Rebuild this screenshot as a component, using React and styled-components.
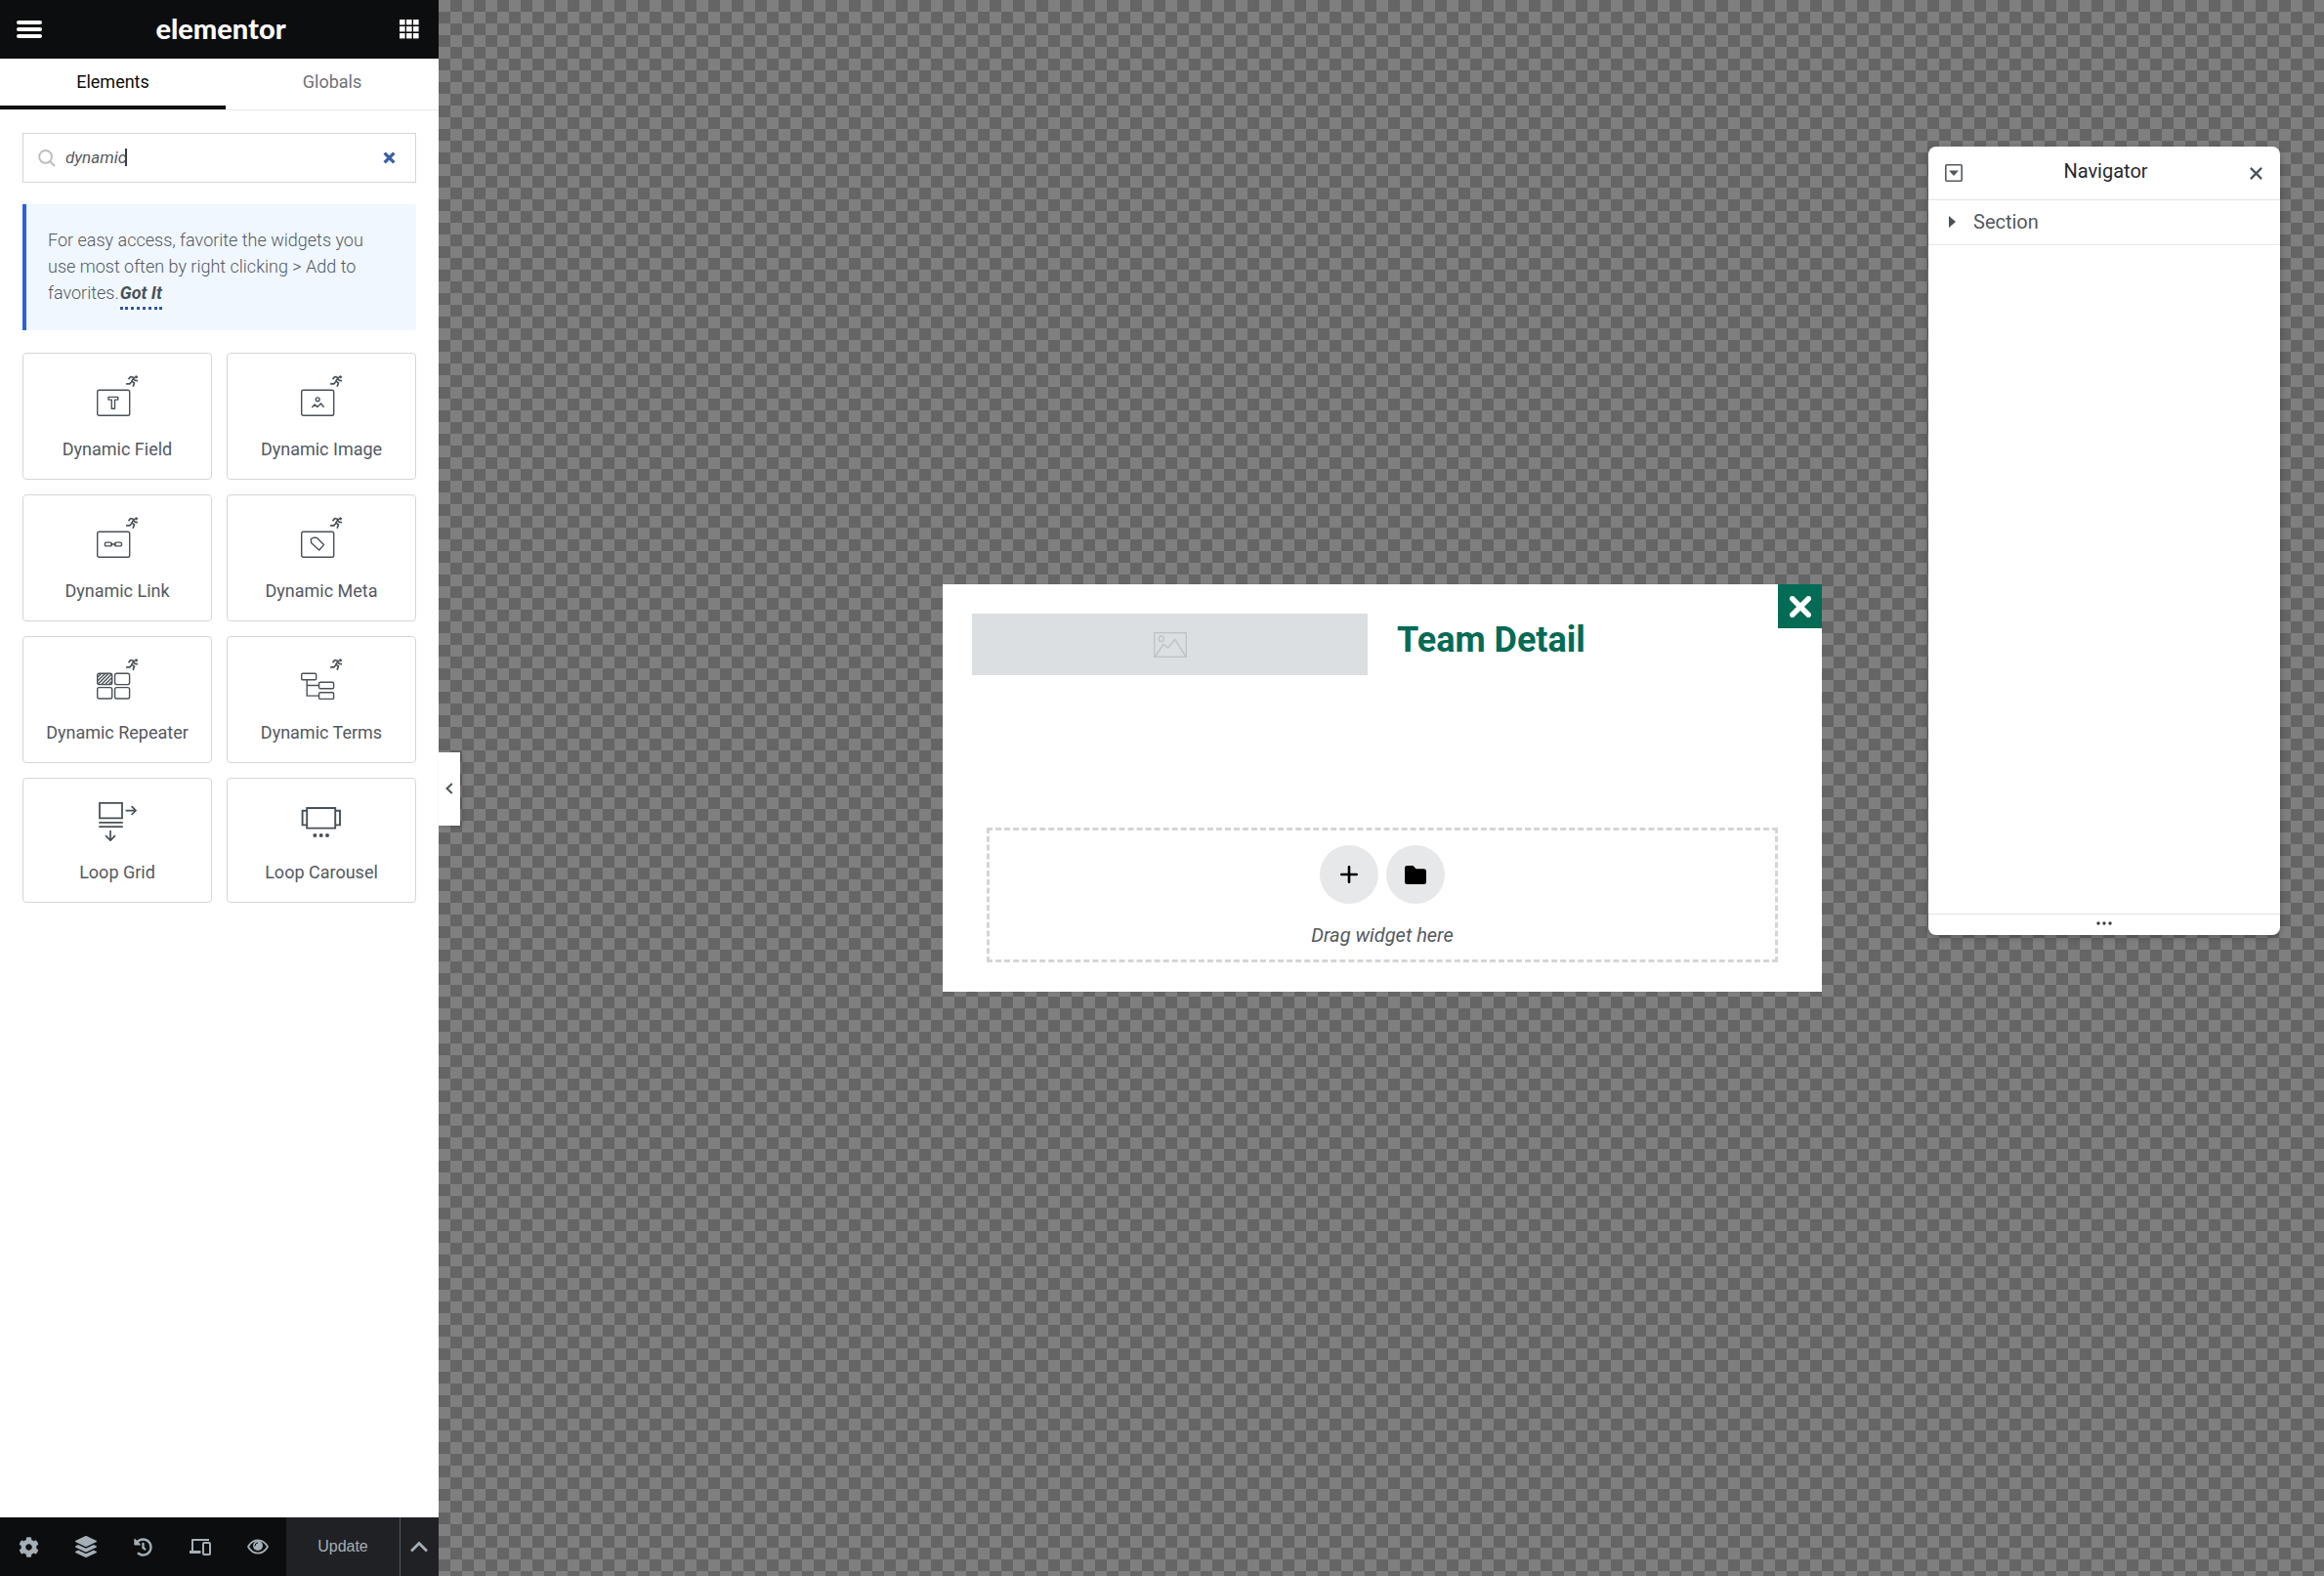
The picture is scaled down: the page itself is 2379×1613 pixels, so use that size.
import React, { useState } from 'react'
import styled, { createGlobalStyle, css } from 'styled-components'
import { FaCog, FaLayerGroup, FaHistory } from 'react-icons/fa'

const GlobalStyle = createGlobalStyle`
  * {
    box-sizing: border-box;
  }
  body {
    margin: 0;
    font-family: Roboto, sans-serif;
    font-size: 18px;
    color: #54595f;
  }
  button {
    padding: 0;
    border: 0;
    background: none;
    font: inherit;
    color: inherit;
    cursor: pointer;
  }
  svg {
    display: block;
  }
`

const Editor = styled.div`
  display: flex;
  min-height: 100vh;
`

/* ---------- panel ---------- */

const Panel = styled.aside`
  flex: 0 0 449px;
  display: flex;
  flex-direction: column;
  background: #fff;
`

const PanelHeader = styled.header`
  display: flex;
  align-items: center;
  justify-content: space-between;
  height: 60px;
  padding: 0 20px 0 17px;
  background: #0c0d0e;
  color: #fff;
`

const Logo = styled.h1`
  margin: 0;
  padding-bottom: 2px;
  font-family: Lato, sans-serif;
  font-size: 29px;
  font-weight: 900;
  line-height: 58px;
`

const Tabs = styled.div`
  display: flex;
  height: 53px;
  border-bottom: 1px solid #e6e9ec;
`

const Tab = styled.button`
  flex: ${props => (props.$active ? '0 0 231px' : 1)};
  padding-bottom: ${props => (props.$active ? 2 : 6)}px;
  color: #6d7278;
  ${props => props.$active && css`
    border-bottom: 4px solid #0c0d0e;
    color: #0c0d0e;
  `}
`

const PanelBody = styled.div`
  flex: 1;
  padding: 23px;
`

const SearchBox = styled.label`
  position: relative;
  display: flex;
  align-items: center;
  gap: 10px;
  height: 51px;
  padding: 0 20px 0 15px;
  border: 1px solid #d4d6d8;
`

const SearchInput = styled.input`
  flex: 1;
  min-width: 0;
  padding: 0 0 2px;
  border: 0;
  outline: 0;
  background: none;
  font: italic 17px/24px Roboto, sans-serif;
  color: #54595f;
`

const Caret = styled.span`
  position: absolute;
  top: 15px;
  left: 104px;
  width: 2px;
  height: 18px;
  background: #3a3d40;
`

const Notice = styled.div`
  margin: 22px 0 23px;
  padding: 23px 30px 25px 22px;
  border-left: 4px solid #2a62d8;
  border-radius: 0 3px 3px 0;
  background: #f0f7ff;
  font-weight: 300;
  line-height: 27px;
`

const GotIt = styled.a`
  margin-left: 1px;
  padding-bottom: 4px;
  border-bottom: 3px dotted #30569f;
  font-style: italic;
  font-weight: 700;
  color: #495157;
  text-decoration: none;
`

const WidgetGrid = styled.div`
  display: grid;
  grid-template-columns: 1fr 1fr;
  gap: 15px;
`

const Widget = styled.button`
  display: flex;
  flex-direction: column;
  align-items: center;
  gap: 18px;
  padding: 22px 0 17px;
  border: 1px solid #d4d6d8;
  border-radius: 4px;
  line-height: 27px;
`

const PanelFooter = styled.footer`
  display: flex;
  height: 60px;
  background: #0c0d0e;
  color: #a4afb7;
`

const Tool = styled.button`
  flex: 1;
  display: flex;
  align-items: center;
  justify-content: center;
`

const Update = styled.button`
  flex: 0 0 116px;
  background: #1f2124;
  font-family: 'Liberation Sans', sans-serif;
  font-size: 16px;
`

const UpdateOptions = styled.button`
  flex: 0 0 40px;
  display: flex;
  align-items: center;
  justify-content: center;
  border-left: 1px solid #515962;
  background: #1f2124;
`

/* ---------- canvas ---------- */

const Canvas = styled.main`
  position: relative;
  flex: 1;
  display: flex;
  align-items: center;
  justify-content: center;
  padding-left: 2px;
  background: conic-gradient(#656565 25%, #7f7f7f 0 50%, #656565 0 75%, #7f7f7f 0) 0 0 / 24px 24px;
`

const PanelToggle = styled.button`
  position: absolute;
  left: 0;
  top: calc(50% - 37px);
  display: flex;
  align-items: center;
  justify-content: center;
  width: 22px;
  height: 75px;
  background: #fff;
  box-shadow: 2px 1px 4px rgba(0, 0, 0, 0.2);
`

const Popup = styled.section`
  position: relative;
  width: 900px;
  padding: 30px;
  background: #fff;
`

const PopupClose = styled.button`
  position: absolute;
  top: 0;
  right: 0;
  display: flex;
  align-items: center;
  justify-content: center;
  width: 45px;
  height: 45px;
  background: #046b55;
`

const Columns = styled.div`
  display: grid;
  grid-template-columns: 1fr 1fr;
  align-items: start;
  gap: 30px;
  min-height: 219px;
`

const ImagePlaceholder = styled.div`
  display: flex;
  align-items: center;
  justify-content: center;
  height: 63px;
  background: #dcdfe1;
`

const Title = styled.h2`
  margin: 0;
  font-size: 36px;
  font-weight: 700;
  line-height: 54px;
  color: #046b55;
`

const DropZone = styled.div`
  margin: 0 15px;
  padding: 15px 0 11px;
  border: 3px dashed #d5d5d5;
  text-align: center;
`

const RoundButtons = styled.div`
  display: flex;
  justify-content: center;
  gap: 8px;
`

const RoundButton = styled.button`
  display: flex;
  align-items: center;
  justify-content: center;
  width: 60px;
  height: 60px;
  border-radius: 50%;
  background: #e6e8ea;
  color: #000;
`

const DropHint = styled.p`
  margin: 18px 0 0;
  font-size: 20px;
  font-style: italic;
  line-height: 28px;
`

/* ---------- navigator ---------- */

const NavigatorWindow = styled.section`
  position: absolute;
  top: 150px;
  right: 45px;
  display: flex;
  flex-direction: column;
  width: 360px;
  height: 807px;
  border-radius: 8px;
  background: #fff;
  box-shadow: 0 2px 6px rgba(0, 0, 0, 0.3);
`

const NavigatorHeader = styled.header`
  display: flex;
  align-items: center;
  justify-content: space-between;
  height: 55px;
  padding: 0 17px;
  border-bottom: 1px solid #e0e3e6;
`

const NavigatorTitle = styled.h3`
  margin: 0;
  padding-bottom: 5px;
  font-size: 20px;
  font-weight: 400;
  color: #26292c;
`

const NavigatorItem = styled.button`
  display: flex;
  align-items: center;
  gap: 18px;
  height: 46px;
  padding: 0 0 2px 21px;
  border-bottom: 1px solid #e6e9ec;
  font-size: 20px;
`

const NavigatorFooter = styled.footer`
  display: flex;
  justify-content: center;
  height: 22px;
  margin-top: auto;
  padding-top: 7px;
  border-top: 1px solid #e0e3e6;
`

/* ---------- icons ---------- */

const MenuIcon = () => (
  <svg width="26" height="18" viewBox="0 0 26 18" fill="currentColor">
    <rect y="0" width="26" height="4" rx="2" />
    <rect y="7" width="26" height="4" rx="2" />
    <rect y="14" width="26" height="4" rx="2" />
  </svg>
)

const AppsIcon = () => (
  <svg width="20" height="20" viewBox="0 0 20 20" fill="currentColor">
    {[0, 7, 14].map(y => [0, 7, 14].map(x => (
      <rect key={`${x}-${y}`} x={x} y={y} width="5.6" height="5.4" />
    )))}
  </svg>
)

const SearchIcon = () => (
  <svg width="18" height="18" viewBox="0 0 18 18" fill="none" stroke="#babfc5" strokeWidth="2">
    <circle cx="7.6" cy="7.4" r="6.4" />
    <path d="M12.2 12.2L17 17" />
  </svg>
)

const CrossIcon = ({ size, weight, color, round }) => (
  <svg width={size} height={size} viewBox="0 0 12 12" stroke={color} strokeWidth={weight} strokeLinecap={round ? 'round' : 'butt'}>
    <path d="M1.5 1.5l9 9M10.5 1.5l-9 9" />
  </svg>
)

const Runner = () => (
  <g fill="none" strokeWidth="1.7" strokeLinecap="round" strokeLinejoin="round">
    <circle cx="40.4" cy="1.8" r="1.1" fill="currentColor" strokeWidth="1" />
    <path d="M33 3.6l1.8-2.1 3.4 1-2.4 3.6 2.6 1.8-1 3.2M37.8 3.4l1.6 2.1 2.6.2M35.2 7.3l-1.4 1.6h-3" />
  </g>
)

const Frame = () => <rect x=".7" y="15.2" width="33" height="26" rx="1.8" />

const dynamicDrawings = {
  field: (
    <>
      <Frame />
      <path d="M12 22.4h9.800v2.700h-3.300v9.200h-3.200v-9.200H12z" strokeLinejoin="round" />
    </>
  ),
  image: (
    <>
      <Frame />
      <circle cx="17.2" cy="24.8" r="1.9" />
      <path d="M11.3 33l2.9-3 2.6 2.6 3.7-3.5 3.1 3.6" />
    </>
  ),
  link: (
    <>
      <Frame />
      <rect x="8.3" y="26.1" width="7.2" height="3.8" rx="1.9" />
      <rect x="18.4" y="26.1" width="7.2" height="3.8" rx="1.9" />
      <path d="M14 28h6" />
    </>
  ),
  meta: (
    <>
      <Frame />
      <path d="M10.3 22.6l3-1.4 3.2.2 7 7.2-4.8 5.4-8-7.3z" strokeLinejoin="round" />
    </>
  ),
  repeater: (
    <>
      <rect x=".7" y="15.2" width="15" height="11.4" rx="1.8" />
      <rect x="18.6" y="15.2" width="15" height="11.4" rx="1.8" />
      <rect x=".7" y="29.6" width="15" height="11.4" rx="1.8" />
      <rect x="18.6" y="29.6" width="15" height="11.4" rx="1.8" />
      <path d="M1 19l3.6-3.6M1 22.8l7.6-7.4M1.2 26.2l11-11M4.8 26.5l10.4-10.6M8.6 26.5l7-7M12.4 26.5l3.2-3.2" />
    </>
  ),
  terms: (
    <>
      <rect x=".7" y="15.2" width="15" height="6.6" rx="1.2" />
      <rect x="18.6" y="24.2" width="15" height="6.6" rx="1.2" />
      <rect x="18.6" y="34.8" width="15" height="6.6" rx="1.2" />
      <path d="M6.2 22v16.1h12.4M6.2 27.5h12.4" />
    </>
  ),
}

const DynamicIcon = ({ type }) => (
  <svg width="42" height="44" viewBox="0 0 42 44" fill="none" stroke="#495157" strokeWidth="1.4">
    {dynamicDrawings[type]}
    <Runner />
  </svg>
)

const LoopGridIcon = () => (
  <svg width="42" height="42" viewBox="0 0 42 42" fill="none" stroke="#495157" strokeWidth="1.8">
    <path d="M3 2.8h23v15.6H3zM2.2 22.8h24.6M2.2 27.2h24.6" />
    <path d="M29.6 10.6h10.2M35.6 6.2l4.4 4.4-4.4 4.4M14 31v10M9 36.2l5 5 5-5" strokeWidth="1.7" />
  </svg>
)

const LoopCarouselIcon = () => (
  <svg width="42" height="42" viewBox="0 0 42 42" fill="none" stroke="#495157" strokeWidth="1.9">
    <path d="M6.2 8h29v20.6h-29zM6.2 10.8H1.6v14.6h4.6M35.2 10.8h4.8v14.6h-4.8" />
    <g fill="#495157" stroke="none">
      <circle cx="14.4" cy="36" r="2" />
      <circle cx="20.7" cy="36" r="2" />
      <circle cx="27" cy="36" r="2" />
    </g>
  </svg>
)

const ResponsiveIcon = () => (
  <svg width="22" height="18" viewBox="0 0 22 18" fill="none" stroke="currentColor" strokeWidth="2">
    <path d="M3 13V2h17" strokeLinejoin="round" />
    <path d="M0 14.5h11.5" strokeWidth="3" />
    <rect x="14" y="5" width="7" height="12" rx="1" />
  </svg>
)

const EyeIcon = () => (
  <svg width="22" height="16" viewBox="0 0 22 16" fill="none" stroke="currentColor" strokeWidth="1.8">
    <path d="M1 8C3.5 3.7 7 1.3 11 1.3S18.5 3.7 21 8c-2.5 4.3-6 6.7-10 6.7S3.5 12.3 1 8z" />
    <circle cx="11" cy="7" r="5" fill="currentColor" stroke="none" />
    <path d="M8 7.4A3.2 3.2 0 0 1 11 4" stroke="#0c0d0e" strokeWidth="1" />
  </svg>
)

const ChevronUp = () => (
  <svg width="18" height="12" viewBox="0 0 18 12" fill="none" stroke="currentColor" strokeWidth="2.8">
    <path d="M1 10.5l8-8 8 8" />
  </svg>
)

const ChevronLeft = () => (
  <svg width="8" height="12" viewBox="0 0 8 12" fill="none" stroke="#54595f" strokeWidth="2.2">
    <path d="M6.8 1L1.5 6l5.3 5" />
  </svg>
)

const PictureIcon = () => (
  <svg width="34" height="26" viewBox="0 0 34 26" fill="none" stroke="#bfc3c7" strokeWidth="1.4">
    <rect x=".7" y=".7" width="32.6" height="24.6" />
    <ellipse cx="7.8" cy="6.8" rx="2.5" ry="2.8" />
    <path d="M1.5 25L9.8 12.5l5 3.5 7-8.5L33 25" />
  </svg>
)

const PlusIcon = () => (
  <svg width="18" height="18" viewBox="0 0 18 18" stroke="currentColor" strokeWidth="2.6" strokeLinecap="round">
    <path d="M9 1.3v15.4M1.3 9h15.4" />
  </svg>
)

const FolderIcon = () => (
  <svg width="22" height="19" viewBox="0 0 22 19" fill="currentColor">
    <path d="M2.5 0H8.5l3 3.2h8a2.500 2.500 0 0 1 2.500 2.500V16.500A2.500 2.500 0 0 1 19.500 19H2.500A2.500 2.500 0 0 1 0 16.500V2.500A2.500 2.500 0 0 1 2.500 0z" />
  </svg>
)

const ExpandIcon = () => (
  <svg width="18" height="18" viewBox="0 0 18 18">
    <rect x=".8" y=".8" width="16.4" height="16.4" rx="1" fill="none" stroke="#54595f" strokeWidth="1.6" />
    <path d="M4 6.600h10L9 12z" fill="#54595f" />
  </svg>
)

const TriangleIcon = () => (
  <svg width="7" height="12" viewBox="0 0 7 12" fill="#495157">
    <path d="M0 0l7 6-7 6z" />
  </svg>
)

const DotsIcon = () => (
  <svg width="16" height="4" viewBox="0 0 16 4" fill="#3a3d40">
    <circle cx="2" cy="2" r="1.7" />
    <circle cx="8" cy="2" r="1.7" />
    <circle cx="14" cy="2" r="1.7" />
  </svg>
)

const widgets = [
  { title: 'Dynamic Field', icon: <DynamicIcon type="field" /> },
  { title: 'Dynamic Image', icon: <DynamicIcon type="image" /> },
  { title: 'Dynamic Link', icon: <DynamicIcon type="link" /> },
  { title: 'Dynamic Meta', icon: <DynamicIcon type="meta" /> },
  { title: 'Dynamic Repeater', icon: <DynamicIcon type="repeater" /> },
  { title: 'Dynamic Terms', icon: <DynamicIcon type="terms" /> },
  { title: 'Loop Grid', icon: <LoopGridIcon /> },
  { title: 'Loop Carousel', icon: <LoopCarouselIcon /> },
]

const tools = [
  { label: 'Settings', icon: <FaCog size={21} /> },
  { label: 'Navigator', icon: <FaLayerGroup size={22} /> },
  { label: 'History', icon: <FaHistory size={19} /> },
  { label: 'Responsive Mode', icon: <ResponsiveIcon /> },
  { label: 'Preview Changes', icon: <EyeIcon /> },
]

const ElementsPanel = () => {
  const [query, setQuery] = useState('dynamic')
  const found = widgets.filter(w => query === 'dynamic' || w.title.toLowerCase().includes(query.toLowerCase()))

  return (
    <Panel>
      <PanelHeader>
        <button aria-label="Menu"><MenuIcon /></button>
        <Logo>elementor</Logo>
        <button aria-label="Widgets Panel"><AppsIcon /></button>
      </PanelHeader>
      <Tabs>
        <Tab $active>Elements</Tab>
        <Tab>Globals</Tab>
      </Tabs>
      <PanelBody>
        <SearchBox>
          <SearchIcon />
          <SearchInput
            aria-label="Search Widget"
            value={query}
            onChange={e => setQuery(e.target.value)}
          />
          {query === 'dynamic' && <Caret />}
          <button aria-label="Clear search" onClick={() => setQuery('')}>
            <CrossIcon size={13} weight={3} color="#3a5fa8" />
          </button>
        </SearchBox>
        <Notice>
          For easy access, favorite the widgets you use most often by right clicking &gt; Add to favorites.
          <GotIt href="#">Got It</GotIt>
        </Notice>
        <WidgetGrid>
          {found.map(w => (
            <Widget key={w.title}>
              {w.icon}
              <span>{w.title}</span>
            </Widget>
          ))}
        </WidgetGrid>
      </PanelBody>
      <PanelFooter>
        {tools.map(t => (
          <Tool key={t.label} aria-label={t.label}>{t.icon}</Tool>
        ))}
        <Update>Update</Update>
        <UpdateOptions aria-label="Save Options"><ChevronUp /></UpdateOptions>
      </PanelFooter>
    </Panel>
  )
}

const Navigator = () => (
  <NavigatorWindow>
    <NavigatorHeader>
      <button aria-label="Expand all elements"><ExpandIcon /></button>
      <NavigatorTitle>Navigator</NavigatorTitle>
      <button aria-label="Close navigator">
        <CrossIcon size={15} weight={1.7} color="#495157" />
      </button>
    </NavigatorHeader>
    <NavigatorItem>
      <TriangleIcon />
      <span>Section</span>
    </NavigatorItem>
    <NavigatorFooter><DotsIcon /></NavigatorFooter>
  </NavigatorWindow>
)

export default function App() {
  return (
    <Editor>
      <GlobalStyle />
      <ElementsPanel />
      <Canvas>
        <PanelToggle aria-label="Hide Panel"><ChevronLeft /></PanelToggle>
        <Popup>
          <Columns>
            <ImagePlaceholder><PictureIcon /></ImagePlaceholder>
            <Title>Team Detail</Title>
          </Columns>
          <DropZone>
            <RoundButtons>
              <RoundButton aria-label="Add New Section"><PlusIcon /></RoundButton>
              <RoundButton aria-label="Add Template"><FolderIcon /></RoundButton>
            </RoundButtons>
            <DropHint>Drag widget here</DropHint>
          </DropZone>
          <PopupClose aria-label="Close">
            <CrossIcon size={22} weight={3} color="#fff" round />
          </PopupClose>
        </Popup>
        <Navigator />
      </Canvas>
    </Editor>
  )
}
